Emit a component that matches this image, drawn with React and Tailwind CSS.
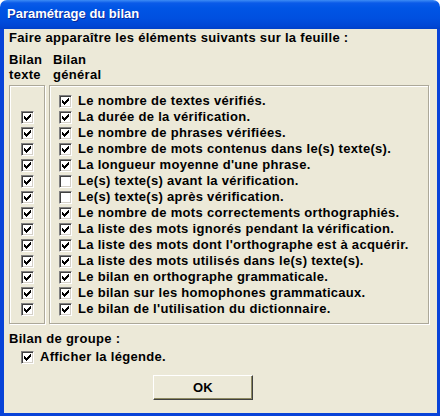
const generalItems = [
  { label: "Le nombre de textes vérifiés.", checked: true, text: null },
  { label: "La durée de la vérification.", checked: true, text: true },
  { label: "Le nombre de phrases vérifiées.", checked: true, text: true },
  { label: "Le nombre de mots contenus dans le(s) texte(s).", checked: true, text: true },
  { label: "La longueur moyenne d'une phrase.", checked: true, text: true },
  { label: "Le(s) texte(s) avant la vérification.", checked: false, text: true },
  { label: "Le(s) texte(s) après vérification.", checked: false, text: true },
  { label: "Le nombre de mots correctements orthographiés.", checked: true, text: true },
  { label: "La liste des mots ignorés pendant la vérification.", checked: true, text: true },
  { label: "La liste des mots dont l'orthographe est à acquérir.", checked: true, text: true },
  { label: "La liste des mots utilisés dans le(s) texte(s).", checked: true, text: true },
  { label: "Le bilan en orthographe grammaticale.", checked: true, text: true },
  { label: "Le bilan sur les homophones grammaticaux.", checked: true, text: true },
  { label: "Le bilan de l'utilisation du dictionnaire.", checked: true, text: true },
];

// classic 7x7 check glyph, one rect per pixel run
const checkRuns = [
  [6, 0, 1], [5, 1, 2], [0, 2, 1], [4, 2, 3], [0, 3, 2], [3, 3, 3], [0, 4, 5], [1, 5, 3], [2, 6, 1],
];

const CheckBox = ({ checked }) => (
  <div className="w-[13px] h-[13px] shrink-0 bg-white border border-t-[#808080] border-l-[#808080] border-b-white border-r-white shadow-[inset_1px_1px_0_#404040,inset_-1px_-1px_0_#d4d0c8] flex items-center justify-center">
    {checked && (
      <svg width="7" height="7" viewBox="0 0 7 7" shapeRendering="crispEdges">
        {checkRuns.map(([x, y, w], i) => (
          <rect key={i} x={x} y={y} width={w} height="1" fill="#000" />
        ))}
      </svg>
    )}
  </div>
);

const etched = "border border-[#aca899] shadow-[inset_1px_1px_0_#fff,1px_1px_0_#fff]";

export default function App() {
  return (
    <div className="w-[440px] h-[416px] flex flex-col bg-white font-['Liberation_Sans',Arial,sans-serif] font-bold text-[13px] tracking-[0.3px] text-black">
      {/* Title bar */}
      <div className="h-[29px] shrink-0 rounded-t-[7px] bg-[linear-gradient(to_bottom,#3d8cf5_0px,#0a5ae8_3px,#0055e5_8px,#0050e0_18px,#0046d4_26px,#0040c8_29px)] flex items-center px-[7px] pb-[1px]">
        <span className="text-white text-[13px] tracking-[0px] [text-shadow:1px_1px_0_#0a2a9a]">Paramétrage du bilan</span>
      </div>

      {/* Body */}
      <div className="flex-1 bg-[#ece9d8] border-l-4 border-r-[3px] border-b-[3px] border-[#0843d8] pl-[5px] pr-[8px] flex flex-col">
        <div className="leading-[15px] pt-[1px]">Faire apparaître les éléments suivants sur la feuille :</div>

        <div className="flex gap-[4px] mt-[7px] leading-[15px]">
          <div className="w-[36px]">
            <div>Bilan</div>
            <div>texte</div>
          </div>
          <div className="pl-[4px]">
            <div>Bilan</div>
            <div>général</div>
          </div>
        </div>

        <div className="flex gap-[4px] mt-[3px] h-[239px]">
          <div className={`w-[36px] ${etched} pt-[7px]`}>
            {generalItems.map((item, i) => (
              <div key={i} className="h-[16px] flex items-center justify-center">
                {item.text !== null && <CheckBox checked={item.text} />}
              </div>
            ))}
          </div>
          <div className={`flex-1 ${etched} pt-[7px] pl-[9px]`}>
            {generalItems.map((item, i) => (
              <div key={i} className="h-[16px] flex items-center gap-[6px] whitespace-nowrap">
                <CheckBox checked={item.checked} />
                <span className="leading-[16px]">{item.label}</span>
              </div>
            ))}
          </div>
        </div>

        <div className="leading-[15px] mt-[7px]">Bilan de groupe :</div>
        <div className="h-[16px] mt-[3px] pl-[12px] flex items-center gap-[6px]">
          <CheckBox checked />
          <span className="leading-[16px]">Afficher la légende.</span>
        </div>

        <div className="mt-[10px] pl-[144px]">
          <button className="w-[100px] h-[25px] bg-[#ece9d8] border-t border-l border-t-white border-l-white border-r border-b border-r-[#404040] border-b-[#404040] shadow-[inset_-1px_-1px_0_#8d8961] flex items-center justify-center font-bold text-[13px]">
            OK
          </button>
        </div>
      </div>
    </div>
  );
}
